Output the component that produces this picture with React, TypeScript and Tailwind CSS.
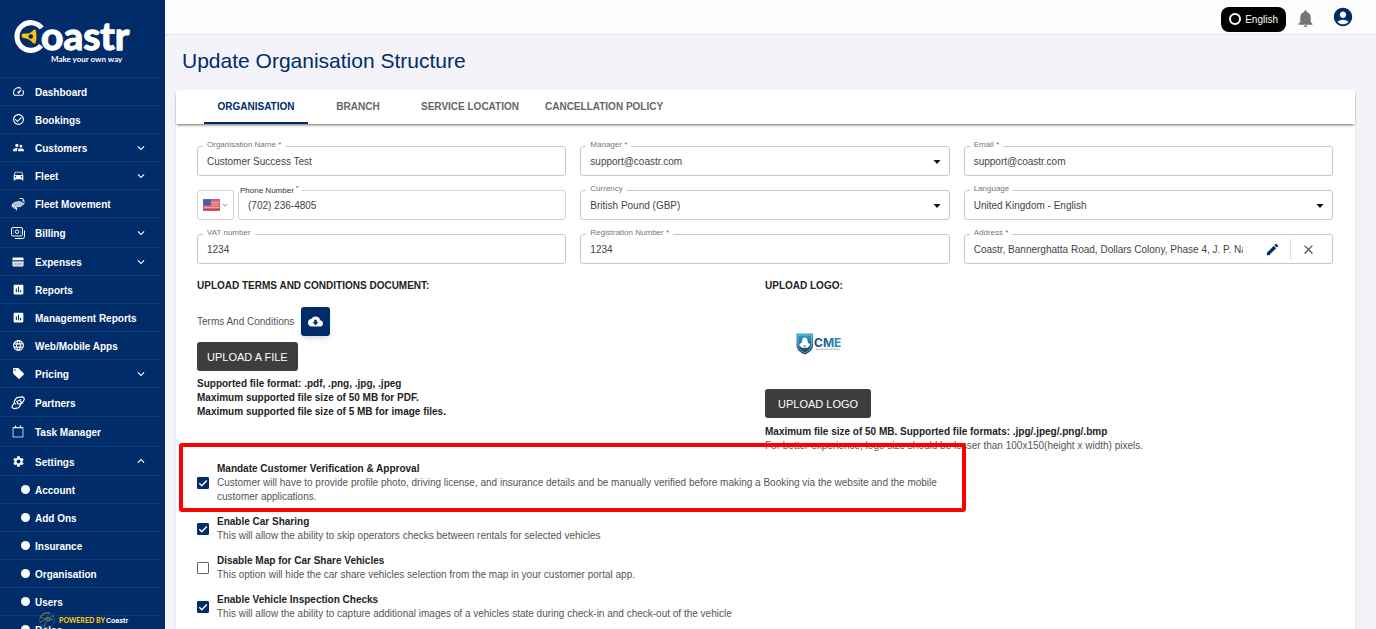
import type { ReactNode } from 'react';
import {
  MdAccountCircle,
  MdAssessment,
  MdCheckCircleOutline,
  MdClose,
  MdCloudDownload,
  MdDirectionsCar,
  MdEdit,
  MdKeyboardArrowDown,
  MdKeyboardArrowUp,
  MdLanguage,
  MdLocalOffer,
  MdNotifications,
  MdSettings,
  MdSpeed,
  MdSupervisorAccount,
} from 'react-icons/md';

function CarMovementIcon() {
  return (
    <svg viewBox="0 0 28 28" className="size-3.5" fill="none" stroke="currentColor" aria-hidden="true">
      <path d="M3 14l4-3 9-2 6 2 1 5-4 3-12 1-4-2z" fill="currentColor" fillOpacity="0.7" strokeWidth="1.500" />
      <path d="M17 3l7 0 0 6M25 5c2 5 1 8-1 11M2 16c0 5 4 7 9 7M8 20l4 3-2 4" strokeWidth="1.800" />
      <circle cx="9" cy="17" r="1.500" fill="#002c69" strokeWidth="1" />
      <circle cx="19" cy="15" r="1.500" fill="#002c69" strokeWidth="1" />
    </svg>
  );
}

function BillingIcon() {
  return (
    <svg viewBox="0 0 28 24" className="h-3 w-3.5" fill="none" stroke="currentColor" strokeWidth="2" aria-hidden="true">
      <rect x="1" y="1" width="22" height="17" rx="3" />
      <circle cx="12" cy="9.500" r="3.500" />
      <path d="M5 5v9M19 5v9" strokeWidth="0.800" strokeOpacity="0.6" />
      <path d="M27 7v12q0 4-4 4H8" />
    </svg>
  );
}

function ExpensesIcon() {
  return (
    <svg viewBox="0 0 24 24" className="size-3" aria-hidden="true">
      <rect x="1" y="3" width="22" height="18" rx="2" fill="currentColor" />
      <path d="M1 8h22v3H1z" fill="#002c69" fillOpacity="0.8" />
      <path d="M3 13h18v6H3z" fill="#002c69" fillOpacity="0.3" />
    </svg>
  );
}

function PartnersIcon() {
  return (
    <svg viewBox="0 0 30 30" className="size-[15px]" fill="none" stroke="currentColor" strokeWidth="2.600" strokeLinecap="round" strokeLinejoin="round" aria-hidden="true">
      <path d="M10 18c-3-1-4-4-2-7l3-5c1-2 3-2 5-2l8-1c3 0 5 3 4 6l-3 6c-1 2-3 3-5 3h-4c-2 0-3-2-2-3" />
      <path d="M20 12c2 1 3 4 1 6l-3 6c-1 2-3 3-5 3l-6 1c-4 0-6-3-4-6l4-6" />
      <path d="M12 13l9-4" />
    </svg>
  );
}

function TaskIcon() {
  return (
    <svg viewBox="0 0 24 26" className="h-[13px] w-3" fill="none" stroke="currentColor" strokeWidth="1.500" aria-hidden="true">
      <path d="M2 5h20v19H2z" />
      <path d="M2 5.500h20" strokeWidth="2" />
      <path d="M7 1v5M17 1v5" strokeWidth="2.500" />
    </svg>
  );
}

type NavItem = {
  label: string;
  icon: ReactNode;
  size: string;
  chevron?: 'down' | 'up';
};

const navItems: NavItem[] = [
  { label: 'Dashboard', icon: <MdSpeed />, size: 'h-7' },
  { label: 'Bookings', icon: <MdCheckCircleOutline />, size: 'h-7' },
  { label: 'Customers', icon: <MdSupervisorAccount />, size: 'h-7', chevron: 'down' },
  { label: 'Fleet', icon: <MdDirectionsCar />, size: 'h-7', chevron: 'down' },
  { label: 'Fleet Movement', icon: <CarMovementIcon />, size: 'h-7' },
  { label: 'Billing', icon: <BillingIcon />, size: 'h-[30px]', chevron: 'down' },
  { label: 'Expenses', icon: <ExpensesIcon />, size: 'h-7', chevron: 'down' },
  { label: 'Reports', icon: <MdAssessment />, size: 'h-7' },
  { label: 'Management Reports', icon: <MdAssessment />, size: 'h-7' },
  { label: 'Web/Mobile Apps', icon: <MdLanguage />, size: 'h-7' },
  { label: 'Pricing', icon: <MdLocalOffer />, size: 'h-7', chevron: 'down' },
  { label: 'Partners', icon: <PartnersIcon />, size: 'h-[29px]' },
  { label: 'Task Manager', icon: <TaskIcon />, size: 'h-[30px]' },
  { label: 'Settings', icon: <MdSettings />, size: 'h-[29px]', chevron: 'up' },
];

const settingsItems = ['Account', 'Add Ons', 'Insurance', 'Organisation', 'Users', 'Roles'];

function Logo() {
  return (
    <a href="#home" aria-label="Coastr home" className="flex h-[78px] w-40 shrink-0 border-b border-[#123c76] pt-4 pl-3">
      <svg viewBox="0 0 122 50" className="h-[50px] w-[122px] overflow-visible" aria-hidden="true">
        <path d="M29.700 12A13.800 13.800 0 1 0 29.200 29.600" fill="none" stroke="#fff" strokeWidth="5.200" />
        <path
          d="M9.500 19.500q0-2 2-2h3.500q3 0 5-2l1.500-1.500q1.500-1.300 2.300.5l.5 3q.3 3 0 6l-.6 3q-.9 2-2.500.7l-2.200-2.200q-2-2-5-2.500l-2.500-.5q-2-.5-2-2.500z"
          fill="#fdc010"
        />
        <circle cx="18.800" cy="20.500" r="2.300" fill="#002c69" />
        <text x="29" y="34" fill="#fff" stroke="#fff" strokeWidth="1.300" strokeLinejoin="round" fontFamily="Lato, sans-serif" fontWeight="700" fontSize="39">
          oastr
        </text>
        <text x="39" y="46" fill="#fff" fontFamily="Lato, sans-serif" fontWeight="700" fontSize="8">
          Make your own way
        </text>
      </svg>
    </a>
  );
}

function PoweredBy() {
  return (
    <div className="absolute bottom-0 left-[38px] flex h-[18px] items-center gap-[3px] whitespace-nowrap text-[7px] leading-none font-bold">
      <svg viewBox="0 0 36 36" className="size-[18px]" fill="none" strokeWidth="1.500" aria-hidden="true">
        <circle cx="18" cy="18" r="15" stroke="#4a6a8c" strokeDasharray="8 2" />
        <path d="M5 12c8 6 18 5 26-3M14 33c-3-8 4-15 16-16M19 13c-5 6-12 8-15 9" stroke="#8a8f5c" />
        <path d="M4 14C8 6 16 2 24 5" stroke="#b49b34" />
        <circle cx="20" cy="16" r="4" stroke="#8a8f5c" />
      </svg>
      <span className="flex items-center gap-px">
        <span className="font-[Lato] font-black text-[#f5c518]">POWERED BY</span>
        <span className="text-white">Coastr</span>
      </span>
    </div>
  );
}

function Sidebar() {
  return (
    <aside className="relative flex w-[165px] shrink-0 flex-col overflow-hidden bg-[#002c69] text-white">
      <Logo />
      <nav aria-label="Main" className="w-40">
        <ul className="text-[10px] font-bold">
          {navItems.map((item) => (
            <li key={item.label}>
              <a href="#nav" className={`flex items-center border-b border-[#123c76] pr-3 pl-[11px] ${item.size}`}>
                <span className="flex w-6 shrink-0 items-center">
                  <span className="flex w-3.5 items-center justify-center text-[13px]">{item.icon}</span>
                </span>
                <span className="flex-1 pt-0.5 whitespace-nowrap">{item.label}</span>
                {item.chevron === 'down' && <MdKeyboardArrowDown className="text-[14px]" />}
                {item.chevron === 'up' && <MdKeyboardArrowUp className="text-[14px]" />}
              </a>
            </li>
          ))}
          {settingsItems.map((label) => (
            <li key={label}>
              <a href="#settings" className="flex h-7 items-center gap-[5px] border-b border-[#123c76] pl-[21px]">
                <span className="size-[9px] rounded-full bg-white" />
                <span className="pt-0.5">{label}</span>
              </a>
            </li>
          ))}
        </ul>
      </nav>
      <PoweredBy />
    </aside>
  );
}

function TopBar() {
  return (
    <header className="flex h-[35px] shrink-0 items-center justify-end border-b border-[#e6e6ea] bg-[#fdfdfd] pr-[22px]">
      <button type="button" className="mt-1 flex h-[25px] items-center gap-1 rounded-lg bg-black px-2 text-[10px] text-white">
        <span className="size-3 rounded-full border-2 border-white" />
        English
      </button>
      <button type="button" aria-label="Notifications" className="ml-[9px] pt-0.5 text-[21px] text-[#757575]">
        <MdNotifications />
      </button>
      <button type="button" aria-label="Account" className="ml-4 text-[22px] text-[#002c69]">
        <MdAccountCircle />
      </button>
    </header>
  );
}

const tabs = [
  { label: 'ORGANISATION', active: true },
  { label: 'BRANCH' },
  { label: 'SERVICE LOCATION' },
  { label: 'CANCELLATION POLICY' },
];

function Tabs() {
  return (
    <div role="tablist" className="relative flex h-[34px] rounded-t-sm bg-white px-7 text-[10px] font-bold shadow-[0_2px_3px_-1px_rgba(0,0,0,0.6)]">
      {tabs.map((tab) => (
        <button
          key={tab.label}
          type="button"
          role="tab"
          aria-selected={Boolean(tab.active)}
          className={
            tab.active
              ? 'min-w-26 border-b-2 border-[#002c69] px-[13px] text-[#002c69]'
              : 'min-w-25 border-b-2 border-transparent px-[13px] text-[#666]'
          }
        >
          {tab.label}
        </button>
      ))}
    </div>
  );
}

const labelClass = 'absolute -top-[8px] left-[5px] bg-white px-1 text-[8px] leading-3 text-[#777]';
const boxClass = 'relative flex h-[30px] min-w-0 rounded-[3px] border border-[#c8c8c8]';
const controlClass = 'w-full min-w-0 appearance-none bg-transparent px-[9px] text-[10px] text-[#444] outline-none';

function TextField({ id, label, value }: { id: string; label: string; value: string }) {
  return (
    <div className={boxClass}>
      <label htmlFor={id} className={labelClass}>{label}</label>
      <input id={id} type="text" defaultValue={value} className={controlClass} />
    </div>
  );
}

function SelectField({ id, label, value }: { id: string; label: string; value: string }) {
  return (
    <div className={boxClass}>
      <label htmlFor={id} className={labelClass}>{label}</label>
      <select id={id} className={controlClass}>
        <option>{value}</option>
      </select>
      <svg viewBox="0 0 8 4" className="pointer-events-none absolute top-[13px] right-2 h-1 w-2" aria-hidden="true">
        <path d="M0.500 0h7L4 4z" fill="#111" />
      </svg>
    </div>
  );
}

function PhoneField() {
  return (
    <div className="flex min-w-0 gap-1">
      <button type="button" aria-label="Country code" className="flex h-[30px] w-[37px] shrink-0 items-center justify-center gap-0.5 rounded-[3px] border border-[#d5d5d5]">
        <svg viewBox="0 0 17 12" className="h-3 w-[17px]" aria-hidden="true">
          <rect width="17" height="12" fill="#f0606c" />
          <path d="M0 3.500h17M0 6h17M0 8.500h17" stroke="#f9b3b8" strokeWidth="0.800" />
          <path d="M0 10.500h17" stroke="#c8404c" strokeWidth="1" />
          <rect width="8" height="6.500" fill="#3f5fb5" />
          <rect x="0.300" y="0.300" width="16.400" height="11.400" fill="none" stroke="#77787f" strokeWidth="0.600" />
        </svg>
        <svg viewBox="0 0 6 4" className="h-1 w-1.5" fill="none" stroke="#999" aria-hidden="true">
          <path d="M1 1l2 2 2-2" />
        </svg>
      </button>
      <div className="relative flex h-[30px] min-w-0 flex-1 rounded-[3px] border border-[#d5d5d5]">
        <label htmlFor="phone" className="absolute -top-[6px] left-0 bg-white pr-1 pl-px text-[8px] leading-3 text-[#333]">
          Phone Number <sup className="text-[6px]">*</sup>
        </label>
        <input id="phone" type="tel" defaultValue="(702) 236-4805" className={controlClass} />
      </div>
    </div>
  );
}

function AddressField() {
  return (
    <div className={`${boxClass} items-center pr-4`}>
      <label htmlFor="address" className={labelClass}>Address *</label>
      <div className="flex h-full min-w-0 flex-1 pl-[9px]">
        <input
          id="address"
          type="text"
          defaultValue="Coastr, Bannerghatta Road, Dollars Colony, Phase 4, J. P. Nagar, Bengaluru"
          className="w-full min-w-0 bg-transparent text-[10px] text-[#444] outline-none"
        />
      </div>
      <button type="button" aria-label="Edit address" className="ml-[22px] text-[15px] text-[#002c69]">
        <MdEdit />
      </button>
      <span className="mx-[10px] h-5 w-px bg-[#ddd]" />
      <button type="button" aria-label="Clear address" className="text-[15px] text-[#555]">
        <MdClose />
      </button>
    </div>
  );
}

function CmeLogo() {
  return (
    <svg viewBox="0 0 46 22" className="h-[22px] w-[46px]" role="img" aria-label="CME">
      <defs>
        <linearGradient id="shield" x1="0" y1="0" x2="0" y2="1">
          <stop offset="0" stopColor="#2fa3cc" />
          <stop offset="1" stopColor="#123a66" />
        </linearGradient>
        <linearGradient id="wordmark" x1="0" y1="0" x2="1" y2="0">
          <stop offset="0" stopColor="#15406f" />
          <stop offset="1" stopColor="#2b9ac6" />
        </linearGradient>
      </defs>
      <path d="M0.500 0.500h16.500v12c0 4.500-4 7-8.200 9-4.300-2-8.300-4.500-8.300-9z" fill="url(#shield)" />
      <path d="M2 2h13.500v10.500c0 3.500-3 5.500-6.700 7.200C5 18 2 16 2 12.500z" fill="none" stroke="#bfe3f0" strokeWidth="0.500" />
      <path d="M6 7.500c0-4 5.500-4 5.500 0l.5 2.500 2 .8v2l-1.500 1-1 1H6l-1-1-1.500-1v-2l2-.8z" fill="#fff" />
      <path d="M7.200 12.500h3l-1.500 1.500z" fill="#1d5f8c" />
      <text x="18" y="13.500" fontFamily="Inter, sans-serif" fontWeight="700" fontSize="12" fill="url(#wordmark)">CME</text>
      <path d="M20 16.200h24" stroke="#8c94a3" strokeWidth="0.800" strokeDasharray="2 0.500" />
    </svg>
  );
}

function Uploads() {
  return (
    <div className="grid grid-cols-2 text-[10px] leading-[14px] text-[#222]">
      <section>
        <h2 className="font-bold">UPLOAD TERMS AND CONDITIONS DOCUMENT:</h2>
        <div className="mt-[14px] flex items-center gap-[7px]">
          <span className="text-[#555]">Terms And Conditions</span>
          <button type="button" aria-label="Download terms and conditions" className="flex size-[29px] items-center justify-center rounded-[3px] bg-[#002c69] text-[15px] text-white shadow-md">
            <MdCloudDownload />
          </button>
        </div>
        <button type="button" className="mt-[6px] h-[29px] rounded-[3px] bg-[#3d3d3d] px-[10px] text-[11px] text-white">
          UPLOAD A FILE
        </button>
        <p className="mt-[6px] font-bold">
          Supported file format: .pdf, .png, .jpg, .jpeg
          <br />
          Maximum supported file size of 50 MB for PDF.
          <br />
          Maximum supported file size of 5 MB for image files.
        </p>
      </section>
      <section>
        <h2 className="font-bold">UPLOAD LOGO:</h2>
        <div className="mt-10 flex pl-[31px]">
          <CmeLogo />
        </div>
        <button type="button" className="mt-[34px] h-[29px] rounded-[3px] bg-[#3d3d3d] px-[13px] text-[11px] text-white">
          UPLOAD LOGO
        </button>
        <p className="mt-[7px] font-bold">Maximum file size of 50 MB. Supported file formats: .jpg/.jpeg/.png/.bmp</p>
        <p className="text-[#555]">For better experience, logo size should be lesser than 100x150(height x width) pixels.</p>
      </section>
    </div>
  );
}

type Option = { id: string; title: string; text: string; checked: boolean; highlighted?: boolean };

const options: Option[] = [
  {
    id: 'verification',
    title: 'Mandate Customer Verification & Approval',
    text: 'Customer will have to provide profile photo, driving license, and insurance details and be manually verified before making a Booking via the website and the mobile customer applications.',
    checked: true,
    highlighted: true,
  },
  {
    id: 'sharing',
    title: 'Enable Car Sharing',
    text: 'This will allow the ability to skip operators checks between rentals for selected vehicles',
    checked: true,
  },
  {
    id: 'map',
    title: 'Disable Map for Car Share Vehicles',
    text: 'This option will hide the car share vehicles selection from the map in your customer portal app.',
    checked: false,
  },
  {
    id: 'inspection',
    title: 'Enable Vehicle Inspection Checks',
    text: 'This will allow the ability to capture additional images of a vehicles state during check-in and check-out of the vehicle',
    checked: true,
  },
];

function OptionRow({ option }: { option: Option }) {
  return (
    <div className="relative flex items-center gap-2">
      <span className="relative flex size-3 shrink-0">
        <input
          id={option.id}
          type="checkbox"
          defaultChecked={option.checked}
          className="peer size-3 appearance-none rounded-[1px] border border-[#666] bg-white checked:border-[#002c69] checked:bg-[#002c69]"
        />
        <svg viewBox="0 0 12 12" className="pointer-events-none absolute inset-0 hidden size-3 peer-checked:block" fill="none" stroke="#fff" strokeWidth="1.400" aria-hidden="true">
          <path d="M2.300 6.200l2.500 2.500 5-5.200" />
        </svg>
      </span>
      <label htmlFor={option.id} className="min-w-0 text-[10px] leading-[14px] text-[#555]">
        <span className="block font-bold text-[#222]">{option.title}</span>
        {option.text}
      </label>
      {option.highlighted && (
        <span className="pointer-events-none absolute -top-[19px] -right-3 -bottom-2 -left-[18px] rounded-[3px] border-4 border-[#fe0000]" />
      )}
    </div>
  );
}

export default function App() {
  return (
    <div className="flex h-screen overflow-hidden bg-[#f3f3f9] font-['Liberation_Sans',Arial,sans-serif]">
      <Sidebar />
      <div className="flex min-w-0 flex-1 flex-col">
        <TopBar />
        <main className="flex min-h-0 flex-1 flex-col overflow-hidden pr-[21px] pl-[11px]">
          <h1 className="pt-[9px] pb-[13px] pl-[6px] text-[21px] leading-[33px] text-[#002c69]">Update Organisation Structure</h1>
          <div className="flex-1 rounded-t-sm bg-white shadow-sm">
            <Tabs />
            <form className="flex flex-col pt-[22px] pr-[22px] pl-[21px]">
              <div className="grid grid-cols-3 gap-[14px]">
                <TextField id="org-name" label="Organisation Name *" value="Customer Success Test" />
                <SelectField id="manager" label="Manager *" value="support@coastr.com" />
                <TextField id="email" label="Email *" value="support@coastr.com" />
                <PhoneField />
                <SelectField id="currency" label="Currency" value="British Pound (GBP)" />
                <SelectField id="language" label="Language" value="United Kingdom - English" />
                <TextField id="vat" label="VAT number" value="1234" />
                <TextField id="registration" label="Registration Number *" value="1234" />
                <AddressField />
              </div>
              <div className="mt-[15px]">
                <Uploads />
              </div>
              <div className="mt-[9px] flex w-2/3 flex-col gap-[11px]">
                {options.map((option) => (
                  <OptionRow key={option.id} option={option} />
                ))}
              </div>
            </form>
          </div>
        </main>
      </div>
    </div>
  );
}
